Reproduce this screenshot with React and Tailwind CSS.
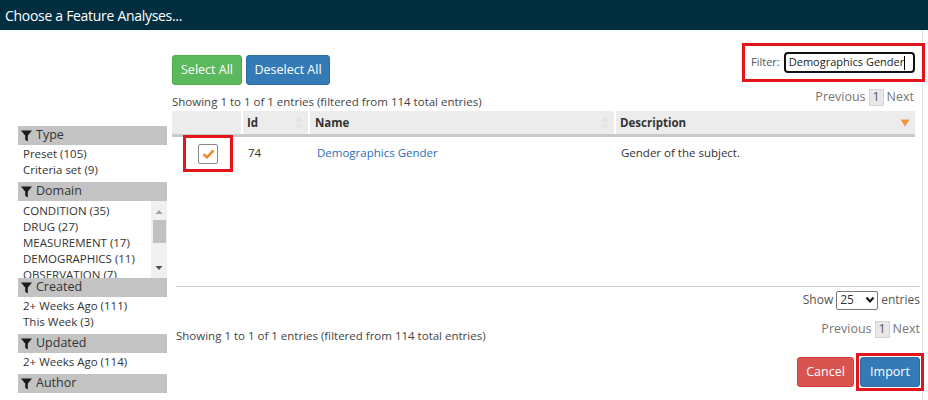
import React from 'react';

const FONT = { fontFamily: '"Open Sans", "Noto Sans", "Liberation Sans", sans-serif' };

function Funnel() {
  return (
    <svg width="11" height="12" viewBox="0 0 11 12" className="shrink-0">
      <path d="M0 0.5 H11 L6.8 5.6 V11.5 L4.2 9.8 V5.6 Z" fill="#1a1a1a" />
    </svg>
  );
}

function FacetHeader({ label }) {
  return (
    <div className="h-[19px] bg-[#c3c3c3] flex items-center gap-[4px] pl-[3px] text-[12.5px] text-[#333]">
      <Funnel />
      <span>{label}</span>
    </div>
  );
}

function FacetItem({ children }) {
  return <div className="h-[16px] leading-[16px] pl-[5px] text-[11.5px] text-[#333] whitespace-nowrap">{children}</div>;
}

function Facet({ label, items }) {
  return (
    <div className="pb-[4px]">
      <FacetHeader label={label} />
      <div className="pt-[1px]">
        {items.map(i => <FacetItem key={i}>{i}</FacetItem>)}
      </div>
    </div>
  );
}

function SortBoth() {
  return (
    <svg width="8" height="16" viewBox="0 0 8 16">
      <path d="M4 1 L7.5 6.5 H0.5 Z" fill="#e2e2e2" />
      <path d="M4 15 L7.5 9.5 H0.5 Z" fill="#e2e2e2" />
    </svg>
  );
}

function SortDesc() {
  return (
    <svg width="10" height="8" viewBox="0 0 10 8">
      <path d="M0.5 0.5 H9.5 L5 7.5 Z" fill="#f0973e" />
    </svg>
  );
}

function Pager() {
  return (
    <div className="flex items-center text-[12.5px] text-[#777]">
      <span>Previous</span>
      <span className="mx-[3px] h-[17px] w-[15px] flex items-center justify-center border border-[#d4d4d4] bg-[#e8e8e8] text-[#555]">1</span>
      <span>Next</span>
    </div>
  );
}

export default function App() {
  const domains = ['CONDITION (35)', 'DRUG (27)', 'MEASUREMENT (17)', 'DEMOGRAPHICS (11)', 'OBSERVATION (7)'];

  return (
    <div className="w-[928px] h-[400px] overflow-hidden bg-white text-[#333]" style={FONT}>
      <div className="h-[30px] bg-[#032e3f] text-white text-[14px] tracking-[-0.3px] pl-[5px] flex items-center">
        Choose a Feature Analyses...
      </div>

      <div className="flex h-[370px]">
        {/* facets */}
        <aside className="ml-[18px] w-[149px] pt-[96px] shrink-0">
          <Facet label="Type" items={['Preset (105)', 'Criteria set (9)']} />
          <div>
            <FacetHeader label="Domain" />
            <div className="h-[77px] flex overflow-hidden">
              <div className="flex-1 pt-[2px]">
                {domains.map(d => <FacetItem key={d}>{d}</FacetItem>)}
              </div>
              <div className="w-[16px] bg-[#f0f0f0] flex flex-col items-center">
                <svg width="8" height="14" viewBox="0 0 8 14" className="mt-[4px]">
                  <path d="M4 5 L7.5 9 H0.5 Z" fill="#a3a3a3" />
                </svg>
                <div className="w-[13px] h-[23px] bg-[#c1c1c1] mt-[1px]" />
                <div className="flex-1" />
                <svg width="8" height="14" viewBox="0 0 8 14" className="mb-[3px]">
                  <path d="M0.5 5 H7.5 L4 9 Z" fill="#505050" />
                </svg>
              </div>
            </div>
          </div>
          <Facet label="Created" items={['2+ Weeks Ago (111)', 'This Week (3)']} />
          <Facet label="Updated" items={['2+ Weeks Ago (114)']} />
          <FacetHeader label="Author" />
        </aside>

        {/* main */}
        <main className="ml-[5px] w-[751px] border-r border-[#e3e3e3] flex flex-col">
          <div className="pr-[7px]">
            <div className="flex items-start justify-between mt-[13px]">
              <div className="flex gap-[4px] mt-[12px]">
                <button className="h-[30px] w-[70px] rounded-[3px] bg-[#5cb85c] border border-[#4cae4c] text-white text-[12.5px]">Select All</button>
                <button className="h-[30px] w-[84px] rounded-[3px] bg-[#337ab7] border border-[#2e6da4] text-white text-[12.5px]">Deselect All</button>
              </div>
              <div className="-mr-[10px] w-[183px] h-[39px] border-[3px] border-[#e3141c] flex items-center pl-[6px] gap-[4px]">
                <span className="text-[11px] text-[#555]">Filter:</span>
                <div className="w-[131px] h-[21px] border-2 border-[#111] rounded-[4px] flex items-center pl-[3px] text-[11px] text-[#222] whitespace-nowrap overflow-hidden">
                  Demographics Gender<span className="w-px h-[14px] bg-black shrink-0" />
                </div>
              </div>
            </div>

            <div className="flex items-end justify-between h-[26px]">
              <span className="text-[11.5px] text-[#444] mb-[1px]">Showing 1 to 1 of 1 entries (filtered from 114 total entries)</span>
              <div className="mb-[4px] mr-[1px]"><Pager /></div>
            </div>

            {/* table */}
            <div className="text-[11.5px]">
              <div className="flex h-[26px] bg-[#ececec] border-b-[3px] border-[#c9c9c9] font-bold text-[#333]">
                <div className="w-[71px] border-r-2 border-white" />
                <div className="w-[67px] border-r-2 border-white flex items-center justify-between pl-[4px] pr-[5px]">
                  <span>Id</span><SortBoth />
                </div>
                <div className="w-[306px] border-r-2 border-white flex items-center justify-between pl-[5px] pr-[5px]">
                  <span>Name</span><SortBoth />
                </div>
                <div className="flex-1 flex items-center justify-between pl-[4px] pr-[5px]">
                  <span>Description</span><SortDesc />
                </div>
              </div>
              <div className="flex h-[35px] items-start">
                <div className="w-[71px] pl-[11px]">
                  <div className="-mt-[2px] w-[50px] h-[37px] border-[3px] border-[#e3141c] flex items-center justify-center">
                    <div className="w-[20px] h-[20px] border border-[#888] rounded-[2px] bg-white flex items-center justify-center">
                      <svg width="13" height="10" viewBox="0 0 13 10">
                        <path d="M1.5 5.2 L5 8.3 L11.5 1.5" stroke="#ec8a2e" strokeWidth="2.6" fill="none" />
                      </svg>
                    </div>
                  </div>
                </div>
                <div className="w-[67px] pl-[5px] pt-[7px] text-[#333]">74</div>
                <div className="w-[306px] pl-[7px] pt-[7px] text-[#2a6fba]">Demographics Gender</div>
                <div className="flex-1 pl-[5px] pt-[7px] text-[#333]">Gender of the subject.</div>
              </div>
            </div>
          </div>

          <div className="mt-auto pl-[4px] pr-[2px] pb-[9px]">
            <div className="border-t border-[#d0d0d0]" />
            <div className="flex justify-end items-center gap-[3px] mt-[4px] text-[12px] text-[#555]">
              <span>Show</span>
              <div className="w-[42px] h-[19px] border border-[#777] rounded-[2px] flex items-center justify-between pl-[3px] pr-[2px] text-[#333]">
                <span>25</span>
                <svg width="10" height="8" viewBox="0 0 10 8">
                  <path d="M1.5 1.5 L5 5.5 L8.5 1.5" stroke="#111" strokeWidth="2" fill="none" />
                </svg>
              </div>
              <span>entries</span>
            </div>
            <div className="flex justify-between items-start mt-[10px]">
              <span className="text-[11.5px] text-[#444] mt-[7px]">Showing 1 to 1 of 1 entries (filtered from 114 total entries)</span>
              <Pager />
            </div>
            <div className="flex justify-end items-center gap-[2px] mt-[9px]">
              <button className="h-[30px] w-[57px] rounded-[3px] bg-[#d9534f] border border-[#d43f3a] text-white text-[12.5px]">Cancel</button>
              <div className="-mr-[4px] border-[3px] border-[#e3141c] p-[1px]">
                <button className="h-[30px] w-[60px] rounded-[3px] bg-[#337ab7] border border-[#2e6da4] text-white text-[12.5px] block">Import</button>
              </div>
            </div>
          </div>
        </main>
      </div>
    </div>
  );
}
